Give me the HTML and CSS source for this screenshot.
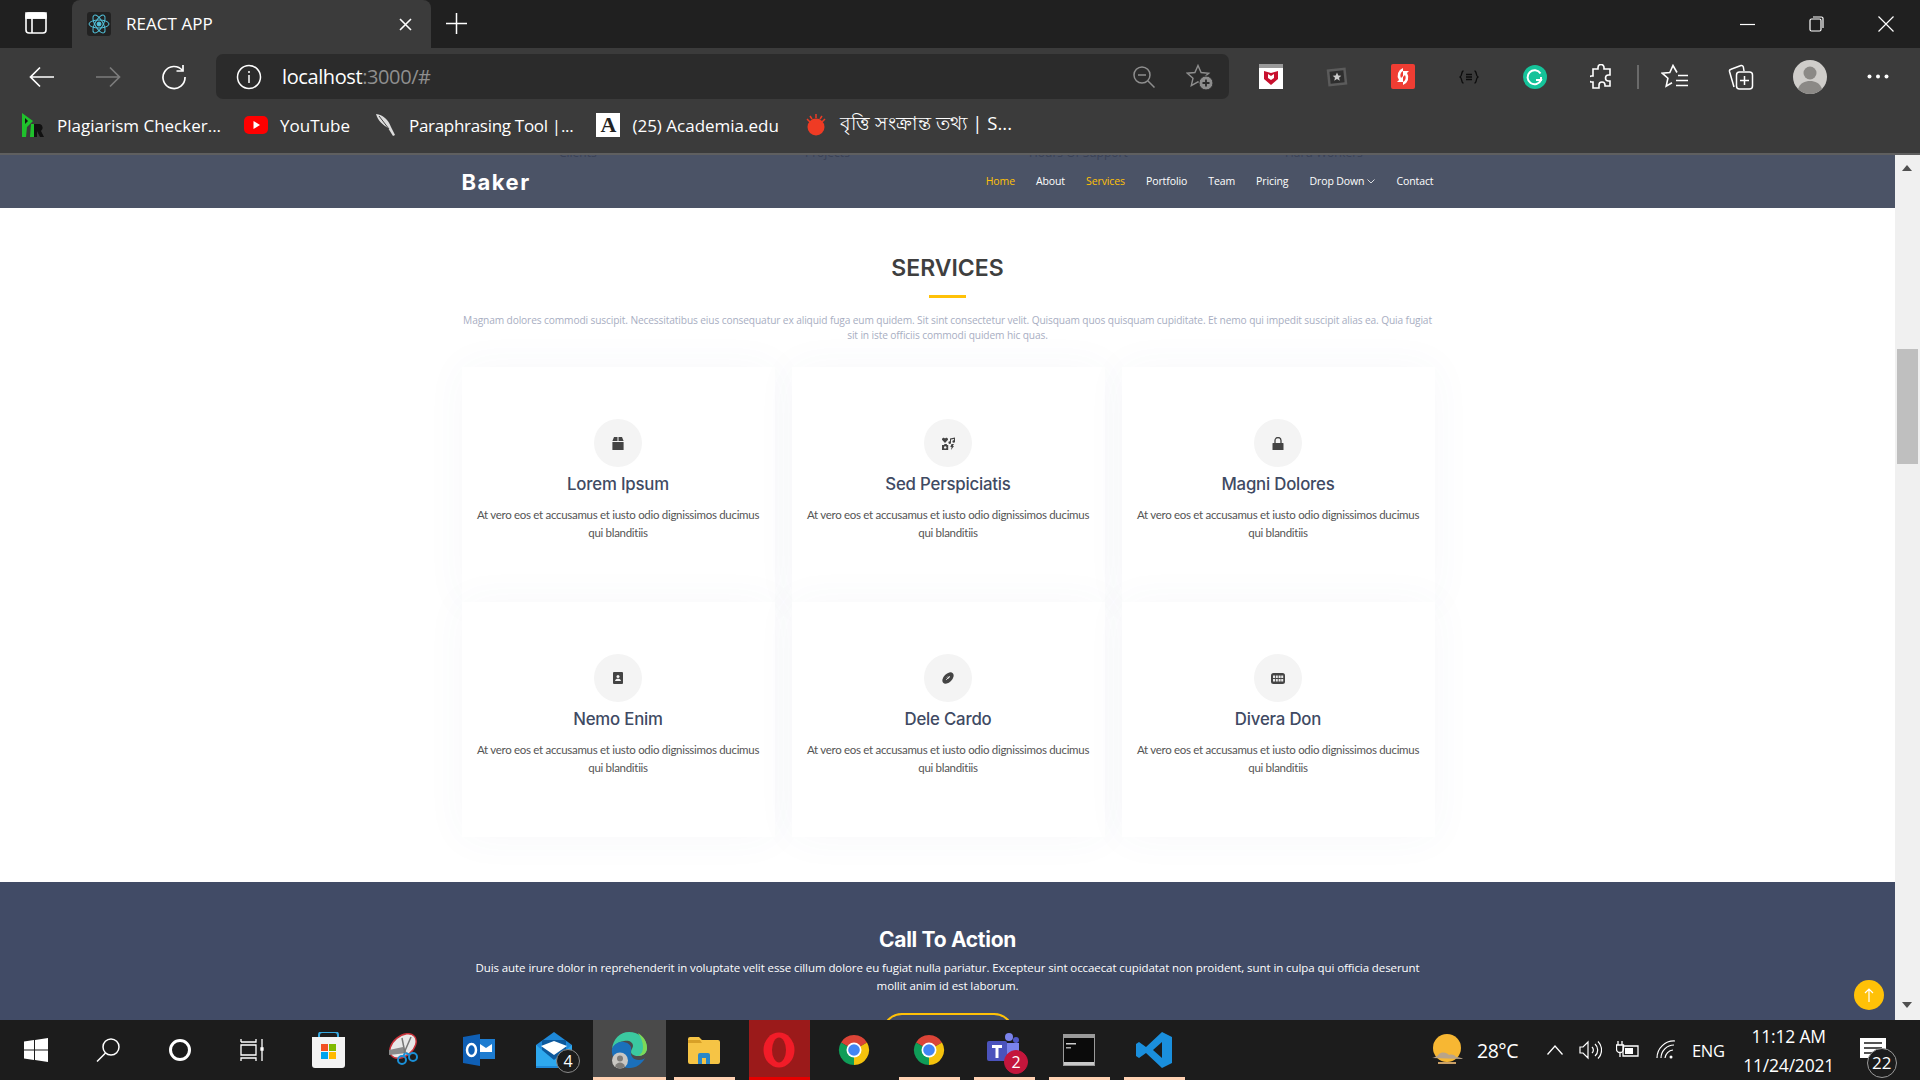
FILE: index.html
```html
<!DOCTYPE html>
<html lang="en">
<head>
  <meta charset="UTF-8">
  <title>REACT APP</title>
  <link rel="stylesheet" href="styles.css">
</head>
<body>
  <div class="tabstrip">
    <div class="tab-side">
      <svg width="22" height="22" viewBox="0 0 22 22" fill="none" stroke="#fff" stroke-width="1.6"><rect x="1" y="1" width="20" height="20" rx="3"/><path d="M1 6h20M7 6v15" /><path d="M1 1h20v5H1z" fill="#fff"/></svg>
    </div>
    <div class="tab">
      <span class="tab-favicon">
        <svg width="24" height="24" viewBox="0 0 24 24" fill="none" stroke="#52c4dd" stroke-width="1"><ellipse cx="12" cy="12" rx="10" ry="4"/><ellipse cx="12" cy="12" rx="10" ry="4" transform="rotate(60 12 12)"/><ellipse cx="12" cy="12" rx="10" ry="4" transform="rotate(120 12 12)"/><circle cx="12" cy="12" r="2" fill="#52c4dd"/></svg>
      </span>
      <span class="tab-title">REACT APP</span>
      <svg class="tab-close" width="13" height="13" viewBox="0 0 13 13" stroke="#fff" stroke-width="1.6"><path d="M1 1l11 11M12 1L1 12"/></svg>
    </div>
    <svg class="tab-new" width="21" height="21" viewBox="0 0 21 21" stroke="#fff" stroke-width="1.5"><path d="M10.5 0v21M0 10.5h21"/></svg>
    <div class="win-controls">
      <span class="win-btn"><svg width="15" height="15" viewBox="0 0 15 15" stroke="#fff" stroke-width="1.2"><path d="M0 7.5h15"/></svg></span>
      <span class="win-btn"><svg width="15" height="16" viewBox="0 0 15 16" fill="none" stroke="#fff" stroke-width="1.2"><rect x="1" y="3" width="11" height="12" rx="1.5"/><path d="M4 1h8.5A1.5 1.5 0 0 1 14 2.500V12"/></svg></span>
      <span class="win-btn"><svg width="16" height="16" viewBox="0 0 16 16" stroke="#fff" stroke-width="1.2"><path d="M.5.500l15 15M15.500.500l-15 15"/></svg></span>
    </div>
  </div>

  <div class="toolbar">
    <span class="tool-slot"><svg width="26" height="22" viewBox="0 0 26 22" fill="none" stroke="#fff" stroke-width="1.7"><path d="M25 11H2M11 1.500L1.500 11l9.500 9.500"/></svg></span>
    <span class="tool-slot"><svg width="26" height="22" viewBox="0 0 26 22" fill="none" stroke="#7c7c7c" stroke-width="1.7"><path d="M1 11h23M15 1.500l9.500 9.500-9.500 9.500"/></svg></span>
    <span class="tool-slot"><svg width="26" height="26" viewBox="0 0 26 26" fill="none" stroke="#fff" stroke-width="1.7"><path d="M21.500 6.500A11 11 0 1 0 24 13"/><path d="M22 1v6h-6.500"/></svg></span>
    <div class="address">
      <svg width="26" height="26" viewBox="0 0 26 26" fill="none" stroke="#fff" stroke-width="1.5"><circle cx="13" cy="13" r="11.500"/><path d="M13 11v8"/><path d="M13 7v2"/></svg>
      <span class="url"><span class="url-host">localhost</span><span class="url-rest">:3000/#</span></span>
      <span class="address-end">
        <svg width="22" height="22" viewBox="0 0 22 22" fill="none" stroke="#8e8e8e" stroke-width="1.5"><circle cx="9" cy="9" r="8"/><path d="M5 9h8M15 15l6.500 6.500"/></svg>
        <svg width="28" height="26" viewBox="0 0 28 26" fill="none" stroke="#8e8e8e" stroke-width="1.4"><path d="M12 1.500l3.100 7 7.600.7-5.700 5 1.700 7.500L12 17.800l-6.700 3.900L7 14.200l-5.700-5 7.600-.7z"/><circle cx="20" cy="19" r="7" fill="#8e8e8e" stroke="#2b2b2b" stroke-width="1"/><path d="M20 15.500v7M16.500 19h7" stroke="#2b2b2b" stroke-width="1.800"/></svg>
      </span>
    </div>
    <span class="tool-slot ext-first">
      <svg width="24" height="25" viewBox="0 0 24 25"><rect width="24" height="25" fill="#fff"/><rect width="24" height="4" fill="#999"/><path d="M5 7l7 2 7-2v8l-7 6-7-6z" fill="#c8102e"/><path d="M9 10l3 2 3-2v4l-3 2-3-2z" fill="#fff"/></svg>
    </span>
    <span class="tool-slot">
      <svg width="22" height="20" viewBox="0 0 22 20"><rect x="1.500" y="1.500" width="19" height="17" transform="rotate(-6 11 10)" fill="#5b5b5b"/><rect x="4" y="4" width="14" height="12" transform="rotate(-6 11 10)" fill="#2e2e2e"/><path d="M11 5.500l1.300 3 3 .2-2.300 2 .8 3-2.800-1.600-2.800 1.600.8-3-2.300-2 3-.2z" fill="#ccc"/></svg>
    </span>
    <span class="tool-slot">
      <svg width="24" height="25" viewBox="0 0 24 25"><rect width="24" height="25" rx="2" fill="#ef3d33"/><path d="M12 4a8 8 0 0 0-4 12l-2 2h6v-6l-2 2a5 5 0 0 1 2-7zM12 21a8 8 0 0 0 4-12l2-2h-6v6l2-2a5 5 0 0 1-2 7z" fill="#fff"/></svg>
    </span>
    <span class="tool-slot">
      <svg width="20" height="14" viewBox="0 0 20 14" fill="none" stroke="#0c0c0c" stroke-width="1.300"><path d="M4.500 1C2 1 3.500 6 1 7c2.500 1 1 6 3.500 6M15.500 1C18 1 16.500 6 19 7c-2.500 1-1 6-3.500 6M7 4.500h6M7 7h6M7 9.500h6"/></svg>
    </span>
    <span class="tool-slot">
      <svg width="24" height="24" viewBox="0 0 24 24"><circle cx="12" cy="12" r="12" fill="#15c39a"/><path d="M17.500 8.500A7 7 0 1 0 18 15h-5" fill="none" stroke="#fff" stroke-width="2"/><path d="M18 12v4" stroke="#fff" stroke-width="2"/></svg>
    </span>
    <span class="tool-slot">
      <svg width="22" height="25" viewBox="0 0 22 25" fill="none" stroke="#fff" stroke-width="1.6"><path d="M8 5V3.500a3 3 0 0 1 6 0V5h6v6h-1.500a2.500 2.500 0 0 0 0 6H20v5h-5v-1a3 3 0 0 0-6 0v3H3v-6H1.500a3 3 0 0 1 0-6H3V5z"/></svg>
    </span>
    <span class="tool-sep"></span>
    <span class="tool-slot">
      <svg width="28" height="26" viewBox="0 0 28 26" fill="none" stroke="#fff" stroke-width="1.600"><path d="M16 8.500L12 1.500 8.800 8.500l-7.600.7 5.700 5-1.700 8 5.800-3.400"/><path d="M17 11.500h10M15 16.500h12M15 21.500h12"/></svg>
    </span>
    <span class="tool-slot">
      <svg width="26" height="26" viewBox="0 0 26 26" fill="none" stroke="#fff" stroke-width="1.500"><path d="M6 23L1.500 7.500a2 2 0 0 1 1.500-2.300L13 1.500a2 2 0 0 1 2.300 1.200L16 7"/><rect x="8.500" y="8" width="16" height="17" rx="3"/><path d="M16.500 12v9M12 16.500h9"/></svg>
    </span>
    <span class="tool-slot slot-avatar">
      <svg width="34" height="34" viewBox="0 0 34 34"><circle cx="17" cy="17" r="17" fill="#cfcdca"/><circle cx="17" cy="13" r="6.500" fill="#8b8986"/><path d="M5 29c2-6 7-8 12-8s10 2 12 8a17 17 0 0 1-24 0z" fill="#8b8986"/></svg>
    </span>
    <span class="tool-slot slot-more">
      <svg width="22" height="5" viewBox="0 0 22 5" fill="#fff"><circle cx="2.500" cy="2.500" r="2"/><circle cx="11" cy="2.500" r="2"/><circle cx="19.500" cy="2.500" r="2"/></svg>
    </span>
  </div>

  <div class="bookmarks">
    <a class="bm bm-pr">
      <svg width="24" height="24" viewBox="0 0 24 24"><path d="M1 0l11 8-6 6-1 10H1z" fill="#1fc12c"/><path d="M4 5l3 3-3 3z" fill="#111"/><path d="M11 11h8a4 4 0 0 1 1 7l3 6h-4l-3-6v6h-5z" fill="#111"/><path d="M10 11h3v13h-4z" fill="#1fc12c"/></svg>
      <span>Plagiarism Checker...</span>
    </a>
    <a class="bm bm-yt">
      <svg width="24" height="18" viewBox="0 0 24 18"><rect width="24" height="18" rx="5" fill="#f00"/><path d="M9.500 5l6.500 4-6.500 4z" fill="#fff"/></svg>
      <span>YouTube</span>
    </a>
    <a class="bm bm-para">
      <svg width="21" height="24" viewBox="0 0 21 24"><path d="M1 1c7 1 12 5 15 13l4 8-2 1-5-8C8 12 3 8 1 1z" fill="#ddd"/><path d="M4 3l10 13" stroke="#444" stroke-width="1"/></svg>
      <span>Paraphrasing Tool |...</span>
    </a>
    <a class="bm bm-acad">
      <span class="acad-icon">A</span>
      <span>(25) Academia.edu</span>
    </a>
    <a class="bm bm-bn">
      <svg width="20" height="24" viewBox="0 0 20 24"><circle cx="10" cy="14" r="8.500" fill="#ef3b24"/><path d="M10 1v4M4 3l2 3M16 3l-2 3M1 6l3 3M19 6l-3 3" stroke="#ef3b24" stroke-width="1.500"/></svg>
      <span class="bm-bn-text">বৃত্তি সংক্রান্ত তথ্য | S...</span>
    </a>
  </div>

  <div class="viewport">
    <div class="page">
      <nav class="nav">
        <span class="peek peek-1">Clients</span>
        <span class="peek peek-2">Projects</span>
        <span class="peek peek-3">Hours Of Support</span>
        <span class="peek peek-4">Hard Workers</span>
        <div class="nav-inner">
          <span class="logo">Baker</span>
          <ul class="nav-links">
            <li class="active">Home</li>
            <li>About</li>
            <li class="active">Services</li>
            <li>Portfolio</li>
            <li>Team</li>
            <li>Pricing</li>
            <li>Drop Down <svg width="8" height="5" viewBox="0 0 8 5" fill="none" stroke="#fff" stroke-width=".8"><path d="M.5.500L4 4 7.500.500"/></svg></li>
            <li>Contact</li>
          </ul>
        </div>
      </nav>

      <section class="services">
        <h2>SERVICES</h2>
        <div class="title-line"></div>
        <p class="section-sub">Magnam dolores commodi suscipit. Necessitatibus eius consequatur ex aliquid fuga eum quidem. Sit sint consectetur velit. Quisquam quos quisquam cupiditate. Et nemo qui impedit suscipit alias ea. Quia fugiat sit in iste officiis commodi quidem hic quas.</p>
        <div class="service-grid">
          <div class="card">
            <div class="card-icon"><svg width="12" height="13" viewBox="0 0 12 13" fill="#444"><path d="M2 0h3.500v4H.4zM6.500 0H10l1.600 4H6.500zM.4 5h11.200v8H.4z"/></svg></div>
            <h4>Lorem Ipsum</h4>
            <p>At vero eos et accusamus et iusto odio dignissimos ducimus qui blanditiis</p>
          </div>
          <div class="card">
            <div class="card-icon"><svg width="13" height="13" viewBox="0 0 13 13" fill="#444"><path d="M3 6L0 2.800C-.3 1 2 0 3 1.500 4 0 6.300 1 6 2.800zM8 1.500l5-1v4a1.300 1.300 0 1 1-1-1.200V2L9 2.600v3a1.300 1.300 0 1 1-1-1.200zM0 8h2l.6-1h2l.6 1h1v5H0zM9.500 7H12l-1.200 2H12l-3 4 .6-3H8.300z"/><circle cx="3.200" cy="10.400" r="1.200" fill="#f4f4f4"/></svg></div>
            <h4>Sed Perspiciatis</h4>
            <p>At vero eos et accusamus et iusto odio dignissimos ducimus qui blanditiis</p>
          </div>
          <div class="card">
            <div class="card-icon"><svg width="12" height="13" viewBox="0 0 12 13" fill="#444"><path d="M1 6h10a.5.500 0 0 1 .5.500V13H.5V6.500A.5.500 0 0 1 1 6z"/><path d="M3 6.500V3.500a3 3 0 0 1 6 0v3" fill="none" stroke="#444" stroke-width="1.300"/></svg></div>
            <h4>Magni Dolores</h4>
            <p>At vero eos et accusamus et iusto odio dignissimos ducimus qui blanditiis</p>
          </div>
          <div class="card">
            <div class="card-icon"><svg width="10" height="12" viewBox="0 0 10 12"><rect width="10" height="12" rx="1" fill="#444"/><circle cx="5" cy="4.500" r="1.500" fill="#f4f4f4"/><path d="M2 9c.3-1.600 1.500-2.200 3-2.200s2.700.6 3 2.200z" fill="#f4f4f4"/></svg></div>
            <h4>Nemo Enim</h4>
            <p>At vero eos et accusamus et iusto odio dignissimos ducimus qui blanditiis</p>
          </div>
          <div class="card">
            <div class="card-icon"><svg width="12" height="12" viewBox="0 0 12 12"><ellipse cx="6" cy="6" rx="6.800" ry="4.200" transform="rotate(-45 6 6)" fill="#444"/><path d="M4.200 7.800l3.600-3.600M5 5.500l1.500 1.500M6 4.500l1.500 1.500" stroke="#f4f4f4" stroke-width=".9"/></svg></div>
            <h4>Dele Cardo</h4>
            <p>At vero eos et accusamus et iusto odio dignissimos ducimus qui blanditiis</p>
          </div>
          <div class="card">
            <div class="card-icon"><svg width="14" height="11" viewBox="0 0 14 11"><rect width="14" height="11" rx="2.500" fill="#444"/><path d="M2 2.500h2v2.500H2zM4.800 2.500h2v2.500h-2zM7.600 2.500h2v2.500h-2zM10.200 2.500h2v2.500h-2zM2 6h2v2.500H2zM4.800 6h2v2.500h-2zM7.600 6h2v2.500h-2zM10.200 6h2v2.500h-2z" fill="#e8e8e8"/></svg></div>
            <h4>Divera Don</h4>
            <p>At vero eos et accusamus et iusto odio dignissimos ducimus qui blanditiis</p>
          </div>
        </div>
      </section>

      <section class="cta">
        <h3>Call To Action</h3>
        <p>Duis aute irure dolor in reprehenderit in voluptate velit esse cillum dolore eu fugiat nulla pariatur. Excepteur sint occaecat cupidatat non proident, sunt in culpa qui officia deserunt mollit anim id est laborum.</p>
        <a class="cta-btn">Call To Action</a>
      </section>

      <a class="back-top">
        <svg width="10" height="14" viewBox="0 0 10 14" fill="none" stroke="#fff" stroke-width="1.200"><path d="M5 14V1M1 5l4-4 4 4"/></svg>
      </a>
    </div>
    <div class="scrollbar">
      <span class="arrow-up"></span>
      <span class="thumb"></span>
      <span class="arrow-down"></span>
    </div>
  </div>

  <div class="taskbar">
    <svg width="0" height="0" class="defs">
      <symbol id="chrome" viewBox="0 0 32 32">
        <path d="M16 16L3 8.500A15 15 0 0 1 29 8.500z" fill="#db4437"/>
        <path d="M16 16L29 8.500A15 15 0 0 1 16 31z" fill="#f4c20d"/>
        <path d="M16 16L16 31A15 15 0 0 1 3 8.500z" fill="#0f9d58"/>
        <circle cx="16" cy="16" r="7.500" fill="#fff"/>
        <circle cx="16" cy="16" r="5.800" fill="#4285f4"/>
      </symbol>
    </svg>
    <span class="tb-sys"><svg width="24" height="24" viewBox="0 0 24 24" fill="#fff"><path d="M0 3.500l10-1.400V11.500H0zM11 2l13-2v11.500H11zM0 12.500h10v9.400L0 20.500zM11 12.500h13V24l-13-2z"/></svg></span>
    <span class="tb-sys"><svg width="24" height="24" viewBox="0 0 24 24" fill="none" stroke="#fff" stroke-width="1.500"><circle cx="15" cy="9" r="8"/><path d="M9.500 15L1 23.500"/></svg></span>
    <span class="tb-sys"><svg width="24" height="24" viewBox="0 0 24 24" fill="none" stroke="#fff" stroke-width="3"><circle cx="12" cy="12" r="9.500"/></svg></span>
    <span class="tb-sys"><svg width="24" height="24" viewBox="0 0 24 24" fill="none" stroke="#fff" stroke-width="1.300"><path d="M1 4h15V1M1 1v3M1 7h15v10H1zM1 23v-3h15v3M22 1v22"/><path d="M21 10h2v2h-2z" fill="#fff"/></svg></span>
    <span class="tb-item tb-store"><svg width="35" height="36" viewBox="0 0 35 36"><path d="M8 7V3a3 3 0 0 1 3-3h13a3 3 0 0 1 3 3v4" fill="none" stroke="#35a8e0" stroke-width="2"/><path d="M1 5h33v28a3 3 0 0 1-3 3H4a3 3 0 0 1-3-3z" fill="#f3f3f3"/><rect x="10" y="12" width="7" height="7" fill="#f25022"/><rect x="18" y="12" width="7" height="7" fill="#7fba00"/><rect x="10" y="20" width="7" height="7" fill="#00a4ef"/><rect x="18" y="20" width="7" height="7" fill="#ffb900"/></svg></span>
    <span class="tb-item"><svg width="34" height="34" viewBox="0 0 34 34"><ellipse cx="16" cy="13" rx="15" ry="10" transform="rotate(-40 16 13)" fill="#e8e8e8" stroke="#c8323a" stroke-width="1.500"/><path d="M2 17l14-3 4 6-18 2z" fill="#8a8a8a"/><path d="M15 5l3 15M24 4L17 20" stroke="#777" stroke-width="1.500"/><circle cx="15" cy="27" r="4" fill="none" stroke="#1b8fd6" stroke-width="2"/><circle cx="26" cy="24" r="4" fill="none" stroke="#1b8fd6" stroke-width="2"/><path d="M18 20l-2 4M19 20l4 2" stroke="#1b8fd6" stroke-width="2"/></svg></span>
    <span class="tb-item"><svg width="32" height="32" viewBox="0 0 32 32"><rect x="14" y="5" width="18" height="20" fill="#1d7cd0"/><path d="M17 10l6 4 6-4v8H17z" fill="#fff"/><path d="M0 3l17-3v32L0 29z" fill="#0f5fb5"/><ellipse cx="8.500" cy="16" rx="4.500" ry="6" fill="none" stroke="#fff" stroke-width="2.500"/></svg></span>
    <span class="tb-item tb-badged">
      <svg width="36" height="36" viewBox="0 0 36 36"><path d="M18 0l18 13v23H0V13z" fill="#1e88d8"/><path d="M6 8h24v14L18 28 6 22z" fill="#0d5a9e"/><path d="M0 13l18 15 18-15v21H0z" fill="#2ea8ee"/><path d="M5 14l13 9 13-9-13-5z" fill="#fff"/></svg>
      <span class="tb-badge">4</span>
    </span>
    <span class="tb-item tb-active tb-edge">
      <svg width="36" height="36" viewBox="0 0 36 36"><path d="M1 17C2 7 9 0 18 0c10 0 18 7 18 16 0 5-4 8-9 8-4 0-7-2-7-4 0-3 2-4 2-6 0-4-4-6-9-5-6 1-10 4-12 8z" fill="#3bc9a0"/><path d="M1 17c2-5 7-8 12-7 5 1 8 4 7 8-1 6 2 10 8 10 3 0 5-1 6-2-3 6-9 10-15 10C9 36 0 28 1 17z" fill="#1b70bb"/><path d="M27 1c5 3 9 8 9 15 0 5-4 8-9 8 4-2 5-5 5-9 0-5-2-10-5-14z" fill="#7ed957"/></svg>
      <svg class="edge-user" width="16" height="17" viewBox="0 0 16 17"><circle cx="8" cy="8.500" r="8" fill="#c9c7c3"/><circle cx="8" cy="6.500" r="3" fill="#7e7c79"/><path d="M3 14.500c1-3 3-4 5-4s4 1 5 4a8 8 0 0 1-10 0z" fill="#7e7c79"/></svg>
    </span>
    <span class="tb-item tb-open">
      <svg width="32" height="28" viewBox="0 0 32 28"><path d="M0 3a2 2 0 0 1 2-2h9l3 3h16a2 2 0 0 1 2 2v20a2 2 0 0 1-2 2H2a2 2 0 0 1-2-2z" fill="#f6c445"/><path d="M0 4h12l2 3H0z" fill="#d8a027"/><path d="M10 28v-9a2 2 0 0 1 2-2h8a2 2 0 0 1 2 2v9h-4v-6h-4v6z" fill="#2a87c9"/></svg>
    </span>
    <span class="tb-item tb-open tb-active tb-opera">
      <svg width="32" height="36" viewBox="0 0 32 36"><ellipse cx="16" cy="18" rx="15.500" ry="17.500" fill="#f11c28"/><ellipse cx="16" cy="18" rx="7" ry="12.500" fill="#9b1a1a"/></svg>
    </span>
    <span class="tb-item"><svg width="32" height="32"><use href="#chrome"/></svg></span>
    <span class="tb-item tb-open"><svg width="32" height="32"><use href="#chrome"/></svg></span>
    <span class="tb-item tb-open tb-badged">
      <svg width="34" height="36" viewBox="0 0 34 36"><circle cx="22" cy="5" r="4" fill="#7b83eb"/><circle cx="29" cy="8" r="3" fill="#5059c9"/><path d="M14 11h18v14a7 7 0 0 1-14 0z" fill="#7b83eb"/><rect x="0" y="9" width="20" height="20" rx="2" fill="#4b53bc"/><path d="M5 13h10v3h-3.500v10h-3V16H5z" fill="#fff"/></svg>
      <span class="tb-badge tb-badge-red">2</span>
    </span>
    <span class="tb-item tb-open">
      <svg width="32" height="32" viewBox="0 0 32 32"><rect width="32" height="32" fill="#9a9a9a"/><rect x="1" y="4" width="30" height="24" fill="#0b0b0b"/><rect x="3" y="9" width="10" height="1.500" fill="#ccc"/><rect x="3" y="13" width="5" height="1.500" fill="#aaa"/><rect x="1" y="28" width="30" height="3" fill="#c9c9c9"/></svg>
    </span>
    <span class="tb-item tb-open">
      <svg width="36" height="36" viewBox="0 0 36 36"><path d="M26 0l10 5v26l-10 5-16-15-7 5-3-2V12l3-2 7 5zM26 10l-9 8 9 8z" fill="#1a8fdd"/></svg>
    </span>
    <div class="tray">
      <svg class="tray-weather" width="34" height="32" viewBox="0 0 34 32"><circle cx="17" cy="14" r="14" fill="#f7b733"/><path d="M2 24c3-1 5-1 7-4 4-3 8-1 10 1 3-1 6 0 7 2 3 0 6 1 7 2z" fill="#b9a489"/><path d="M8 29h18" stroke="#caa066" stroke-width="2"/></svg>
      <span class="tray-temp">28°C</span>
      <svg class="tray-chev" width="16" height="10" viewBox="0 0 16 10" fill="none" stroke="#fff" stroke-width="1.300"><path d="M.5 9.500L8 1l7.500 8.500"/></svg>
      <svg class="tray-vol" width="23" height="20" viewBox="0 0 23 20" fill="none" stroke="#fff" stroke-width="1.200"><path d="M1 7h3l5-5v16l-5-5H1zM13 7a4 4 0 0 1 0 6M16 4a8 8 0 0 1 0 12M19 1.500a12 12 0 0 1 0 17"/></svg>
      <svg class="tray-batt" width="23" height="20" viewBox="0 0 23 20" fill="none" stroke="#fff" stroke-width="1.300"><path d="M7 6h15v10H7z"/><path d="M2 1v4M6 1v4M.5 5h7v4a3.500 3.500 0 0 1-7 0zM4 12v5"/><rect x="9" y="8" width="8" height="6" fill="#fff" stroke="none"/></svg>
      <svg class="tray-wifi" width="20" height="20" viewBox="0 0 20 20" fill="none" stroke="#fff" stroke-width="1.200"><path d="M1 18a17 17 0 0 1 18-17M5 18a13 13 0 0 1 13-13M9 18a9 9 0 0 1 8-8"/><circle cx="15" cy="17" r="1.500" fill="#fff" stroke="none"/></svg>
      <span class="tray-lang">ENG</span>
      <span class="tray-clock"><span>11:12 AM</span><span>11/24/2021</span></span>
      <span class="tray-notify">
        <svg width="26" height="20" viewBox="0 0 26 20"><path d="M0 0h26v20H9l-3 0H0z" fill="#fff"/><path d="M4 5h18M4 10h18M4 15h12" stroke="#1c1c1c" stroke-width="1.500"/></svg>
        <span class="notify-badge">22</span>
      </span>
    </div>
  </div>
</body>
</html>
```

FILE: styles.css
```css
* { box-sizing: border-box; }
html, body { height: 100%; }
body { margin: 0; width: 1920px; height: 1080px; overflow: hidden; display: flex; flex-direction: column; font-family: "Open Sans", Arial, sans-serif; background: #3b3b3b; color: #fff; }
h2, h3, h4, p, ul { margin: 0; padding: 0; }
svg { display: block; flex: none; }

/* browser chrome */
.tabstrip { height: 48px; background: #202020; display: flex; align-items: stretch; flex: none; }
.tab-side { width: 72px; padding-bottom: 2px; display: flex; align-items: center; justify-content: center; }
.tab { width: 359px; background: #3b3b3b; border-radius: 8px 8px 0 0; display: flex; align-items: center; padding: 0 19px 0 15px; margin-right: 15px; }
.tab-favicon { width: 24px; height: 24px; background: #222; border-radius: 3px; margin-right: 15px; }
.tab-title { font-size: 17px; flex: 1; padding-bottom: 2px; letter-spacing: .05px; }
.tab-new { align-self: center; margin-bottom: 2px; }
.win-controls { margin-left: auto; display: flex; align-items: center; padding-right: 27px; gap: 54px; }
.win-btn { display: block; width: 15px; }

.toolbar { height: 58px; padding: 6px 0 7px 9px; display: flex; align-items: center; background: #3b3b3b; flex: none; }
.tool-slot { width: 66px; height: 45px; display: flex; align-items: center; justify-content: center; flex: none; }
.address { width: 1013px; height: 45px; margin-left: 9px; background: #2b2b2b; border-radius: 7px; display: flex; align-items: center; padding: 0 15px 0 20px; }
.url { font-size: 20px; margin-left: 20px; letter-spacing: -.4px; }
.url-rest { color: #8f8f8f; }
.address-end { margin-left: auto; display: flex; align-items: center; gap: 31px; }
.ext-first { margin-left: 9px; }
.tool-sep { width: 2px; height: 24px; background: #6a6a6a; margin: 0 3px; flex: none; }
.slot-avatar { margin-left: 3px; }
.slot-more { margin-left: 2px; }

.bookmarks { height: 49px; display: flex; align-items: center; padding: 0 0 9px 21px; border-bottom: 2px solid #5f5f5f; flex: none; font-size: 17px; }
.bm { display: flex; align-items: center; gap: 12px; white-space: nowrap; }
.bm-yt { margin-left: 23px; }
.bm-para { margin-left: 25px; gap: 13px; letter-spacing: -.3px; }
.bm-acad { margin-left: 23px; }
.bm-bn { margin-left: 27px; gap: 14px; }
.bm-bn-text { font-size: 18.500px; }
.acad-icon { width: 24px; height: 24px; background: #fff; color: #222; font: bold 22px/24px "Liberation Serif", serif; text-align: center; }

/* page inside the window */
.viewport { height: 865px; display: flex; flex: none; overflow: hidden; }
.page { position: relative; width: 1895px; flex: none; background: #fff; overflow: hidden; }

.nav { position: relative; height: 53px; background: #4b5366; }
.peek { position: absolute; top: -10px; font-size: 12px; line-height: 16px; color: #3a4256; }
.peek-1 { left: 559px; }
.peek-2 { left: 805px; }
.peek-3 { left: 1029px; }
.peek-4 { left: 1285px; }
.nav-inner { width: 972px; height: 53px; margin: 0 auto; display: flex; align-items: center; justify-content: space-between; }
.logo { font-family: Inter, Arial, sans-serif; font-weight: 700; font-size: 22px; letter-spacing: 1.500px; }
.nav-links { list-style: none; display: flex; gap: 21px; padding-bottom: 1px; font-size: 10.500px; letter-spacing: -.1px; }
.nav-links li { display: flex; align-items: center; gap: 3px; }
.nav-links .active { color: #ffc107; }

.services { height: 674px; padding-top: 47px; }
.services h2 { font-family: Inter, Arial, sans-serif; font-weight: 600; font-size: 23px; line-height: 26px; text-align: center; color: #3f3f3f; }
.title-line { width: 37px; height: 3px; background: #ffc107; margin: 14px auto 0; }
.section-sub { width: 972px; margin: 15px auto 0; font-size: 10.200px; letter-spacing: -.125px; line-height: 15px; color: #a8aec2; text-align: center; }
.service-grid { width: 972px; margin: 24px auto 0; display: grid; grid-template-columns: repeat(3, 313px); grid-auto-rows: 235px; column-gap: 17px; }
.card { background: #fff; box-shadow: 0 0 40px 0 rgba(68, 88, 144, .045); padding: 52px 12px 0; text-align: center; }
.card-icon { width: 48px; height: 48px; border-radius: 50%; background: #f4f4f4; margin: 0 auto; display: flex; align-items: center; justify-content: center; }
.card h4 { font-family: Inter, Arial, sans-serif; font-weight: 500; font-size: 16.800px; line-height: 22px; margin-top: 6px; color: #404a63; letter-spacing: -.2px; }
.card p { font-family: Lato, Arial, sans-serif; font-size: 11.500px; letter-spacing: -.3px; line-height: 18px; margin-top: 11px; color: #555; }

.cta { height: 138px; background: #414b66; padding-top: 44px; text-align: center; overflow: hidden; }
.cta h3 { font-family: Inter, Arial, sans-serif; font-weight: 700; font-size: 21px; line-height: 28px; letter-spacing: -.3px; }
.cta p { width: 960px; margin: 5px auto 0; font-size: 11.500px; letter-spacing: -.08px; line-height: 18px; }
.cta-btn { display: block; width: 132px; height: 40px; margin: 18px auto 0; border: 2px solid #ffc107; border-radius: 25px; padding-top: 12px; font-size: 12px; line-height: 18px; }

.back-top { position: absolute; left: 1854px; top: 825px; width: 30px; height: 30px; border-radius: 50%; background: #ffc107; display: flex; align-items: center; justify-content: center; }

.scrollbar { width: 25px; background: #f0f0f0; position: relative; }
.arrow-up { position: absolute; left: 7px; top: 10px; border: 5.500px solid transparent; border-top: 0; border-bottom: 6px solid #505050; }
.arrow-down { position: absolute; left: 7px; top: 847px; border: 5.500px solid transparent; border-bottom: 0; border-top: 6px solid #505050; }
.thumb { position: absolute; left: 2px; top: 194px; width: 21px; height: 115px; background: #bfbfbf; }

/* windows taskbar */
.taskbar { height: 60px; background: #1c1c1c; display: flex; align-items: center; flex: none; position: relative; }
.defs { position: absolute; }
.tb-sys { width: 72px; height: 60px; display: flex; align-items: center; justify-content: center; }
.tb-store { margin-left: 3px; }
.tb-item { position: relative; width: 75px; height: 60px; display: flex; align-items: center; justify-content: center; flex: none; }
.tb-item svg { position: relative; }
.tb-active::before { content: ""; position: absolute; top: 0; bottom: 0; left: 2px; right: 0; background: #4a4a4a; }
.tb-edge::after, .tb-open::after { content: ""; position: absolute; bottom: 0; height: 3px; background: #ffd2b3; }
.tb-edge::after { left: 2px; right: 0; }
.tb-open::after { left: 8px; right: 6px; }
.tb-opera::before { left: 8px; right: 6px; background: #9b1a1a; }
.tb-opera::after { background: #e60000; }
.tb-item .edge-user { position: absolute; left: 21px; top: 32px; }
.tb-badge { position: absolute; left: 40px; top: 29px; width: 24px; height: 24px; border-radius: 50%; background: #1c1c1c; border: 1px solid #8a8a8a; font-size: 16px; line-height: 22px; text-align: center; }
.tb-badge-red { left: 38px; top: 30px; background: #c4163c; border-color: #c4163c; }

.tray { position: absolute; left: 1430px; right: 0; top: 0; height: 60px; display: flex; align-items: center; }
.tray-temp { font-size: 19.500px; margin-left: 13px; letter-spacing: -.5px; }
.tray-chev { margin-left: 29px; }
.tray-vol { margin-left: 16px; }
.tray-batt { margin-left: 14px; }
.tray-wifi { margin-left: 17px; }
.tray-lang { font-size: 16.500px; margin-left: 16px; letter-spacing: -.3px; }
.tray-clock { width: 108px; margin-left: 10px; display: flex; flex-direction: column; align-items: center; gap: 7px; font-size: 17.500px; line-height: 22px; letter-spacing: -.2px; }
.tray-notify { position: relative; margin-left: 15px; align-self: stretch; width: 40px; }
.tray-notify svg { position: absolute; left: 2px; top: 18px; }
.notify-badge { position: absolute; left: 9px; top: 28px; width: 30px; height: 30px; border-radius: 50%; background: #1c1c1c; border: 1px solid #9a9a9a; text-align: center; font-size: 17px; line-height: 27px; }
```
